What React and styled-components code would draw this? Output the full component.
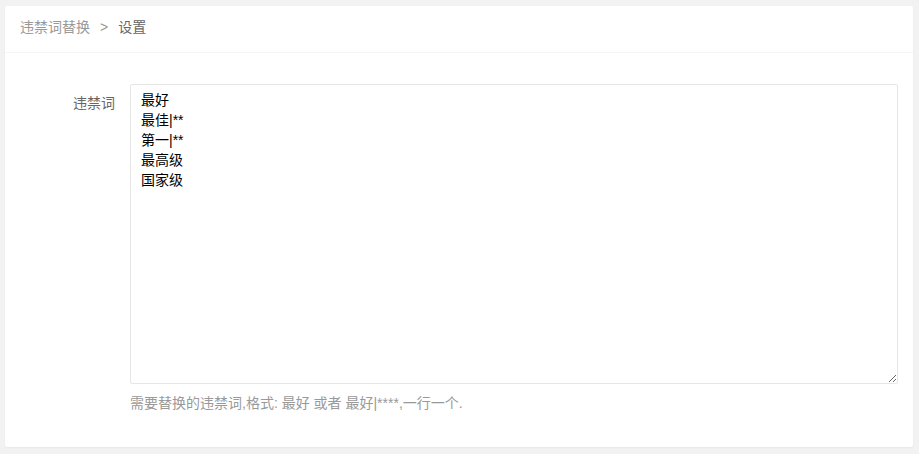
import React from "react";
import styled, { createGlobalStyle } from "styled-components";

const GlobalStyle = createGlobalStyle`
  html, body {
    margin: 0;
    padding: 0;
    background: #f2f2f2;
    font-family: "Liberation Sans", "Noto Sans CJK SC", sans-serif;
    font-size: 14px;
    color: #333;
  }
`;

const Page = styled.div`
  padding: 6px 6px 7px 5px;
`;

const Card = styled.div`
  background: #fff;
  border-radius: 2px;
  box-shadow: 0 1px 2px 0 rgba(0, 0, 0, 0.05);
  height: 441px;
  box-sizing: border-box;
`;

const Header = styled.div`
  height: 47px;
  line-height: 43px;
  padding: 0 15px;
  border-bottom: 1px solid #f6f6f6;
  box-sizing: border-box;
`;

const Crumb = styled.span`
  color: ${(p) => (p.$current ? "#666" : "#999")};
`;

const Separator = styled.span`
  margin: 0 10px;
  color: #999;
`;

const Body = styled.div`
  padding: 31px 15px 0 0;
`;

const FormItem = styled.div`
  display: flex;
  align-items: flex-start;
`;

const Label = styled.label`
  width: 110px;
  flex: none;
  padding: 9px 15px 9px 0;
  text-align: right;
  line-height: 20px;
  color: #666;
`;

const Field = styled.div`
  flex: 1;
  display: flex;
  flex-direction: column;
`;

const TextArea = styled.textarea`
  height: 300px;
  box-sizing: border-box;
  padding: 5px 10px;
  border: 1px solid #e6e6e6;
  border-radius: 2px;
  font-family: inherit;
  font-size: 14px;
  line-height: 20px;
  color: #000;
  outline: none;
  resize: vertical;
`;

const Hint = styled.div`
  margin-top: 9px;
  line-height: 20px;
  color: #999;
`;

const words = ["最好", "最佳|**", "第一|**", "最高级", "国家级"].join("\n");

export default function App() {
  return (
    <>
      <GlobalStyle />
      <Page>
        <Card>
          <Header>
            <Crumb>违禁词替换</Crumb>
            <Separator>&gt;</Separator>
            <Crumb $current>设置</Crumb>
          </Header>
          <Body>
            <FormItem>
              <Label>违禁词</Label>
              <Field>
                <TextArea defaultValue={words} />
                <Hint>需要替换的违禁词,格式: 最好 或者 最好|****,一行一个.</Hint>
              </Field>
            </FormItem>
          </Body>
        </Card>
      </Page>
    </>
  );
}
